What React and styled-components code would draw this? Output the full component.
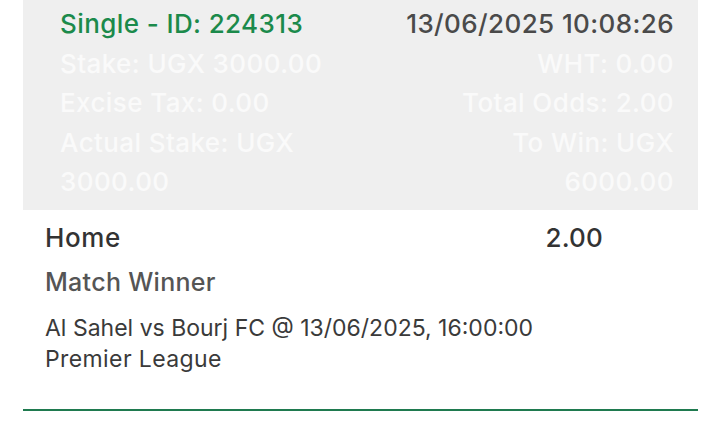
import styled, { createGlobalStyle } from 'styled-components';

const Global = createGlobalStyle`
  body {
    margin: 0;
    background: #ffffff;
    font-family: Inter, "Open Sans", "Liberation Sans", sans-serif;
  }
`

function App(){
  const rows = [
    ['Stake: UGX 3000.00', 'WHT: 0.00'],
    ['Excise Tax: 0.00', 'Total Odds: 2.00'],
    [<>Actual Stake: UGX<br/>3000.00</>, <>To Win: UGX<br/>6000.00</>],
  ];

  return (
    <Page>
      <Global/>
      <Summary>
        <TopRow>
          <BetId>Single - ID: 224313</BetId>
          <Placed>13/06/2025 10:08:26</Placed>
        </TopRow>
        {
          rows.map((row, i) => (
            <InfoRow key={i}>
              <Info>{row[0]}</Info>
              <Info $right>{row[1]}</Info>
            </InfoRow>
          ))
        }
      </Summary>

      <Selection>
        <PickRow>
          <Pick>Home</Pick>
          <Odds>2.00</Odds>
        </PickRow>
        <Market>Match Winner</Market>
        <Event>
          Al Sahel vs Bourj FC @ 13/06/2025, 16:00:00<br/>
          <League>Premier League</League>
        </Event>
      </Selection>
      <Divider/>
    </Page>
  )
}

export default App;

const Page = styled.main`
  width: 675px;
  margin: 0 auto 0 23px;
`

const Summary = styled.section`
  background: #efefef;
  padding: 4px 24px 8px 37px;
  font-size: 26px;
  line-height: 39.5px;
  letter-spacing: 0.4px;
  font-weight: 500;
  height: 210px;
  box-sizing: border-box;
`

const TopRow = styled.div`
  display: flex;
  justify-content: space-between;
`

const BetId = styled.span`
  color: #1b8a4b;
`

const Placed = styled.span`
  color: #4a4a4a;
`

const InfoRow = styled.div`
  display: flex;
  justify-content: space-between;
`

const Info = styled.span`
  color: #fafafa;
  text-align: ${p => p.$right ? 'right' : 'left'};
`

const Selection = styled.section`
  padding: 8px 95px 0 22px;
  height: 199px;
  box-sizing: border-box;
`

const PickRow = styled.div`
  display: flex;
  justify-content: space-between;
  font-size: 26px;
  line-height: 40px;
  font-weight: 500;
  color: #333333;
`

const Pick = styled.span`
  letter-spacing: 0.6px;
`

const Odds = styled.span`
  letter-spacing: 0.2px;
`

const Market = styled.div`
  margin-top: 4px;
  font-size: 25px;
  line-height: 40px;
  letter-spacing: 0.3px;
  color: #555555;
  font-weight: 500;
`

const Event = styled.div`
  margin-top: 11px;
  font-size: 23px;
  line-height: 31px;
  color: #3a3a3a;
`

const League = styled.span`
  letter-spacing: 0.4px;
`

const Divider = styled.hr`
  margin: 0;
  border: none;
  height: 2px;
  background: #1f7a4f;
`
